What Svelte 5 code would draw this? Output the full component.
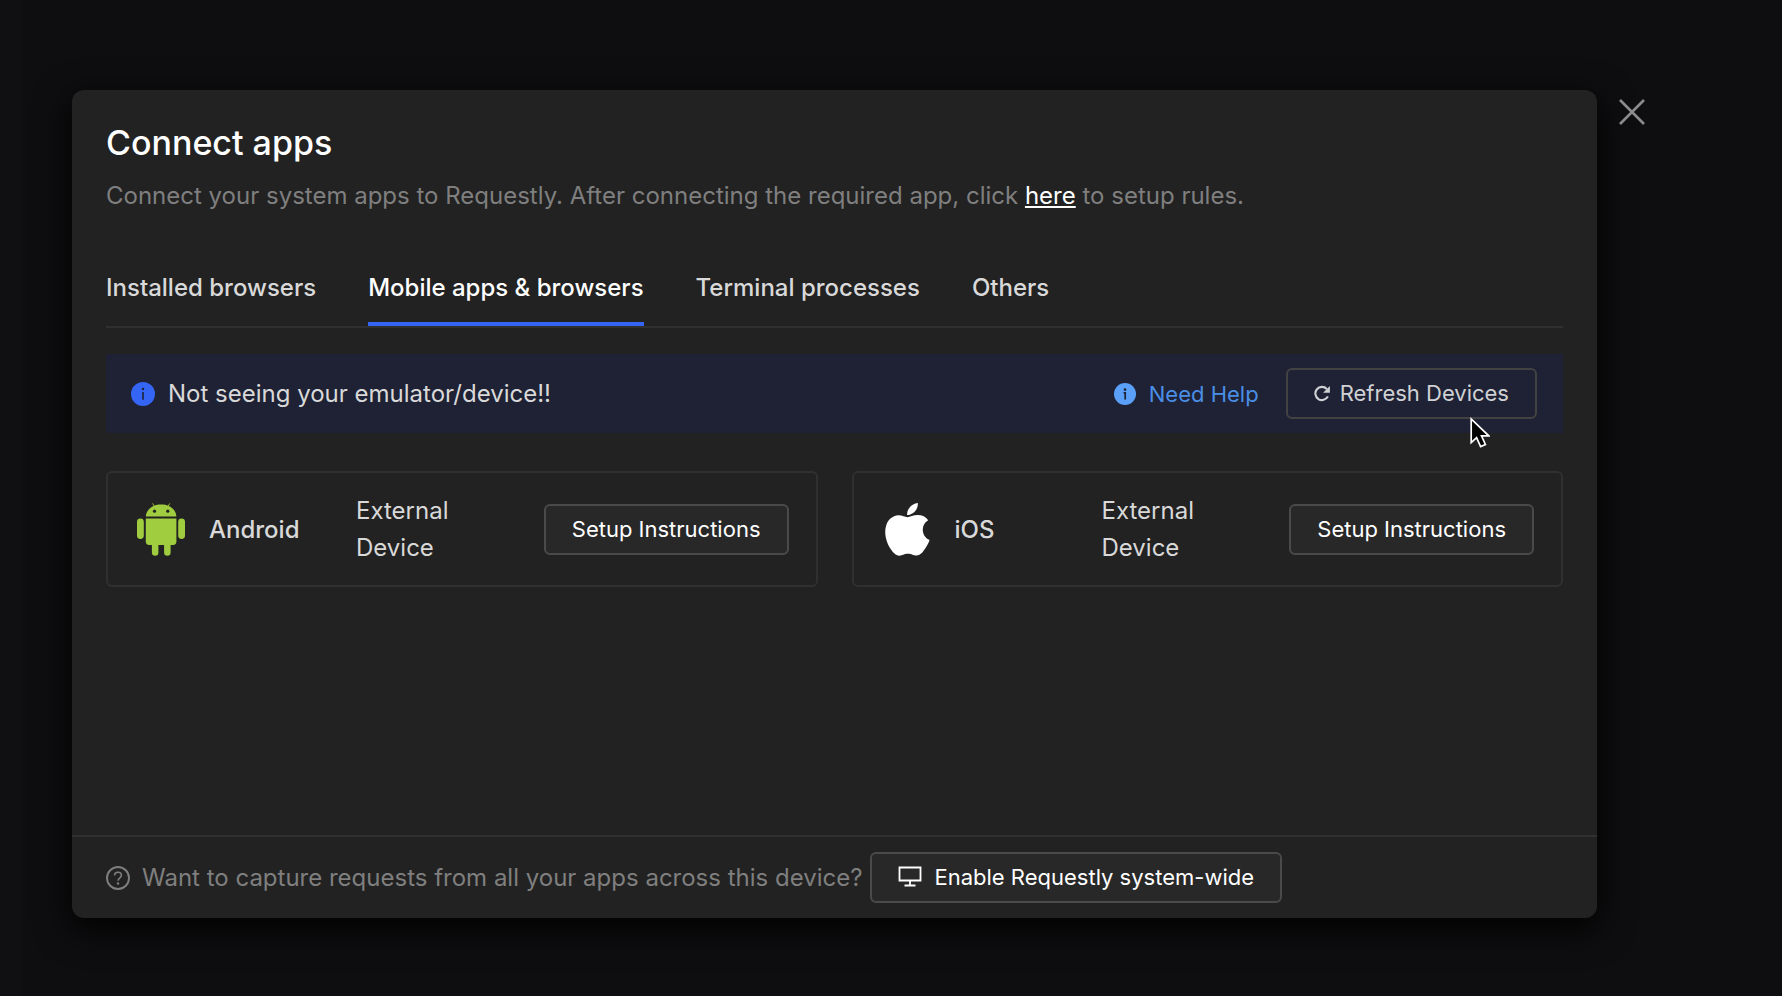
<script>
  const tabs = ['Installed browsers', 'Mobile apps & browsers', 'Terminal processes', 'Others'];
  let active = $state(1);
  const devices = [
    { id: 'android', name: 'Android', kind: 'External Device' },
    { id: 'ios', name: 'iOS', kind: 'External Device' }
  ];
</script>

<div class="page">
  <div class="modal" role="dialog" aria-labelledby="title">
    <div class="content">
      <h1 id="title">Connect apps</h1>
      <p class="lead">
        Connect your system apps to Requestly. After connecting the required app, click <a href="#rules">here</a> to setup rules.
      </p>

      <div class="tabs" role="tablist">
        {#each tabs as tab, i}
          <button class="tab" class:active={i === active} role="tab" aria-selected={i === active} onclick={() => (active = i)}>{tab}</button>
        {/each}
      </div>

      <div class="alert">
        <svg class="info" viewBox="0 0 24 24" aria-hidden="true">
          <circle cx="12" cy="12" r="12" fill="#3565f5" />
          <circle cx="12" cy="7" r="1.2" fill="#1e2234" />
          <path d="M12 10v7.8" stroke="#1e2234" stroke-width="1.6" />
        </svg>
        <span class="message">Not seeing your emulator/device!!</span>
        <a class="help" href="#help">
          <svg viewBox="0 0 22 22" aria-hidden="true">
            <circle cx="11" cy="11" r="11" fill="#5a9ff8" />
            <circle cx="11" cy="6.6" r="1.3" fill="#1e2234" />
            <path d="M9.6 9.8H11.2V16.400" fill="none" stroke="#1e2234" stroke-width="1.7" />
          </svg>
          Need Help
        </a>
        <button class="btn ghost">
          <svg class="reload" viewBox="0 0 16 17" aria-hidden="true">
            <path d="M13.9 11.4A6.6 6.6 0 1 1 12.8 4" fill="none" stroke="currentColor" stroke-width="2.1" />
            <path d="M15.9 1v6.8H9.1z" fill="currentColor" />
          </svg>
          Refresh Devices
        </button>
      </div>

      <div class="cards">
        {#each devices as device}
          <div class="card">
            {#if device.id === 'android'}
              <svg class="logo" viewBox="0 0 48 53" aria-hidden="true">
                <g fill="#a0cc3f">
                  <path d="M8.8 13.6C9.2 6.4 15.6 1.6 24.2 1.6S39 6.4 39.4 13.6z" />
                  <path d="M15.6.4l2.4 4M32.8.4l-2.4 4" stroke="#a0cc3f" stroke-width=".9" />
                  <path d="M8.8 15.6h30.6v23a3.4 3.4 0 0 1-3.4 3.4H12.2a3.4 3.4 0 0 1-3.4-3.4z" />
                  <rect x="0" y="15.6" width="6.8" height="20.4" rx="3.4" />
                  <rect x="41.2" y="15.6" width="6.8" height="20.4" rx="3.4" />
                  <path d="M14.9 40h6.5v9.4a3.2 3.2 0 0 1-6.5 0zM27.1 40h6.5v9.4a3.2 3.2 0 0 1-6.5 0z" />
                </g>
                <circle cx="17.5" cy="8.2" r="1.6" fill="#222" />
                <circle cx="30.8" cy="8.2" r="1.6" fill="#222" />
              </svg>
            {:else}
              <svg class="logo" viewBox="0 0 48 53" aria-hidden="true">
                <g fill="#fff">
                  <path d="M24.1 12.1C23.8 6 28.6 .6 34.8 0C35.5 6 30.3 12 24.1 12.1Z" />
                  <path d="M24.3 14.2C27 14.2 30.4 12 34.8 12C39 12 43 13.9 45.2 17.3C37.3 22 38.5 33.8 46.6 37C45.5 40.2 43.7 43.6 41.5 46.6C39.5 49.5 37.2 52.5 33.5 52.6C30 52.6 28.9 50.7 24.9 50.7C20.9 50.7 19.6 52.5 16.4 52.7C12.8 52.8 10 49.5 8 46.6C3.6 40.3 .3 29.6 3.5 21.5C5.5 16.3 10 12.5 15.4 12.3C18.9 12.2 22.2 14.2 24.3 14.2Z" />
                </g>
              </svg>
            {/if}
            <span class="name">{device.name}</span>
            <span class="kind">{device.kind}</span>
            <button class="btn">Setup Instructions</button>
          </div>
        {/each}
      </div>
    </div>

    <footer>
      <svg class="question" viewBox="0 0 24 24" aria-hidden="true">
        <g fill="none" stroke="currentColor" stroke-width="1.9">
          <circle cx="12" cy="12" r="11" />
          <path d="M8.6 9.6C8.6 7.5 10 6.3 12 6.3S15.4 7.6 15.4 9.4C15.4 11.9 12 11.8 12 14.8" stroke-width="1.6" />
        </g>
        <circle cx="12" cy="17.5" r="1.2" fill="currentColor" />
      </svg>
      <span class="ask">Want to capture requests from all your apps across this device?</span>
      <button class="btn">
        <svg class="desktop" viewBox="0 0 24 23" aria-hidden="true">
          <path d="M1.5 1.5h21v13h-21zM12 14.5v5M6.5 19.5h11" fill="none" stroke="currentColor" stroke-width="1.8" />
        </svg>
        Enable Requestly system-wide
      </button>
    </footer>
  </div>

  <button class="close" aria-label="Close">
    <svg viewBox="0 0 26 26" aria-hidden="true">
      <path d="M1 1l24 24M25 1L1 25" stroke="#8c8c8d" stroke-width="2.6" />
    </svg>
  </button>

  <svg class="cursor" viewBox="0 0 20 31" aria-hidden="true">
    <path d="M1.2 2v23.6l5.4-5 4 9 4.8-2.1-3.9-8.7h7.2z" fill="#000" stroke="#fff" stroke-width="1.7" />
  </svg>
</div>

<style>
  :global(body) {
    margin: 0;
    background: #0e0e10;
  }

  .page {
    box-sizing: border-box;
    position: relative;
    display: flex;
    align-items: flex-start;
    min-height: 100vh;
    padding: 90px 137px 78px 50px;
    border-left: 22px solid #101012;
    font-family: Inter, sans-serif;
    font-size: 24px;
    color: #d9d9d9;
  }

  .modal {
    display: flex;
    flex: 1;
    flex-direction: column;
    min-height: calc(100vh - 168px);
    border-radius: 12px;
    background: #222;
    box-shadow: 0 10px 36px #000;
  }

  .content {
    flex: 1;
    padding: 30px 34px;
  }

  h1 {
    margin: 0;
    font-size: 34px;
    font-weight: 500;
    line-height: 46px;
    color: #fff;
  }

  .lead {
    margin: 12px 0 0;
    line-height: 36px;
    color: #7f7f7f;
  }

  .lead a {
    color: #fff;
    text-underline-offset: 2px;
  }

  .tabs {
    display: flex;
    gap: 52px;
    margin-top: 56px;
    border-bottom: 2px solid #303030;
  }

  .tab {
    padding: 0 0 16px;
    border: 0;
    border-bottom: 4px solid transparent;
    background: none;
    font: 500 24px/36px Inter, sans-serif;
    color: #d9d9d9;
    white-space: nowrap;
  }

  .tab.active {
    border-color: #3565f5;
    color: #fff;
  }

  .alert {
    display: flex;
    align-items: center;
    margin-top: 26px;
    padding: 14px 26px 14px 25px;
    background: #1e2234;
  }

  .info {
    width: 24px;
    height: 24px;
    margin-right: 13px;
  }

  .message {
    flex: 1;
  }

  .help {
    display: flex;
    align-items: center;
    gap: 13px;
    margin-right: 27px;
    font-size: 22px;
    color: #4a8ee6;
    text-decoration: none;
  }

  .help svg {
    width: 22px;
    height: 22px;
  }

  .btn {
    display: flex;
    align-items: center;
    padding: 0 26px;
    border: 2px solid #4a4a4a;
    border-radius: 6px;
    background: #282828;
    font: 400 22px/47px Inter, sans-serif;
    color: #fff;
    white-space: nowrap;
  }

  .btn.ghost {
    border-color: #424242;
    background: none;
    color: #d0d1d5;
  }

  .reload {
    width: 16px;
    height: 17px;
    margin-right: 10px;
  }

  .cards {
    display: grid;
    grid-template-columns: 1fr 1fr;
    gap: 34px;
    margin-top: 38px;
  }

  .card {
    display: flex;
    align-items: center;
    padding: 19px 27px 19px 29px;
    border: 2px solid #303030;
    border-radius: 6px;
  }

  .logo {
    width: 48px;
    height: 53px;
    margin-right: 24px;
  }

  .name {
    width: 147px;
    font-weight: 500;
  }

  .kind {
    width: 110px;
    margin-right: auto;
    line-height: 37px;
  }

  footer {
    display: flex;
    align-items: center;
    padding: 15px 34px;
    border-top: 2px solid #303030;
    color: #7f7f7f;
  }

  .question {
    width: 24px;
    height: 24px;
    margin-right: 12px;
  }

  .ask {
    margin-right: 8px;
  }

  .desktop {
    width: 24px;
    height: 23px;
    margin-right: 12px;
  }

  .close {
    display: flex;
    margin-left: 22px;
    padding: 9px 0;
    border: 0;
    background: none;
  }

  .close svg {
    width: 26px;
    height: 26px;
  }

  .cursor {
    position: absolute;
    top: 417px;
    right: 292px;
    width: 20px;
    height: 31px;
  }
</style>
